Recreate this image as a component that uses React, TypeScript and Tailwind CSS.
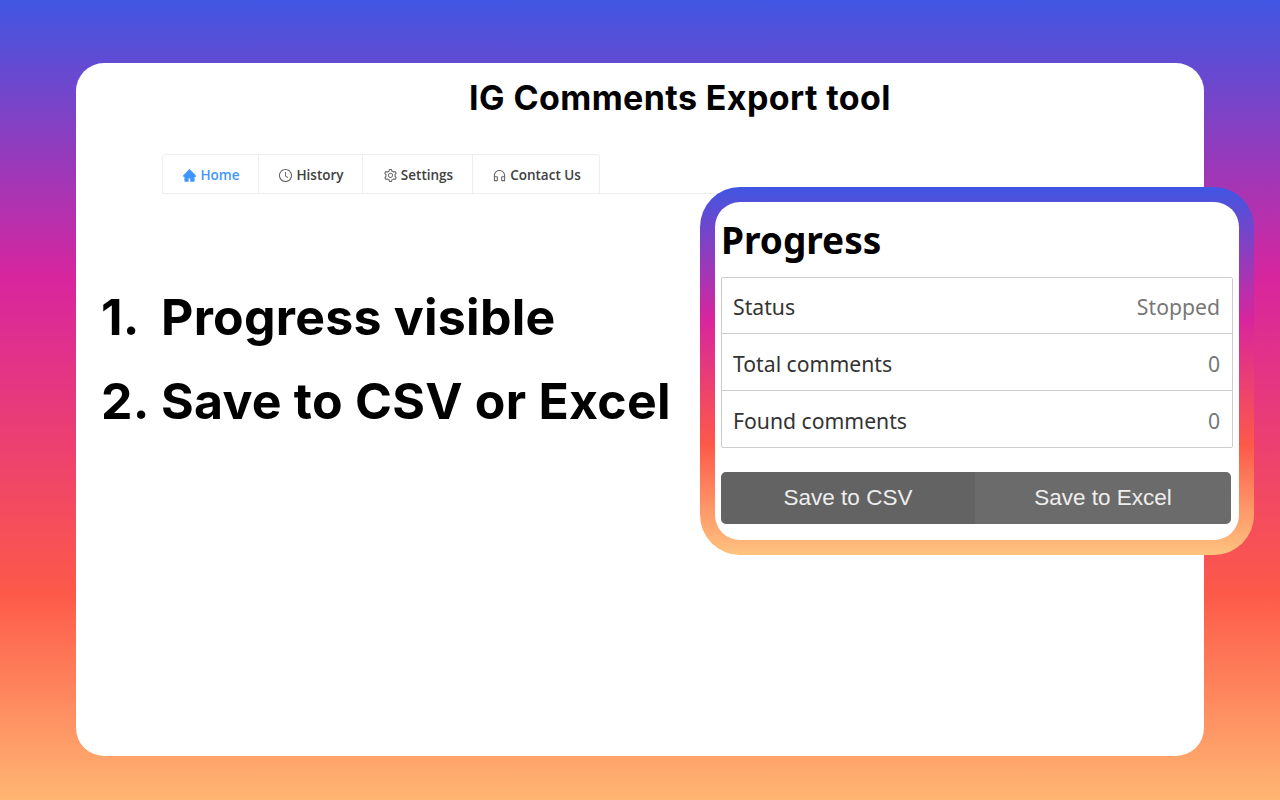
import { AiFillHome, AiOutlineClockCircle, AiOutlineSetting, AiOutlineCustomerService } from 'react-icons/ai';

const tabs = [
  { label: 'Home', icon: AiFillHome, width: 'w-[95px]', active: true },
  { label: 'History', icon: AiOutlineClockCircle, width: 'w-[104px]', active: false },
  { label: 'Settings', icon: AiOutlineSetting, width: 'w-[110px]', active: false },
  { label: 'Contact Us', icon: AiOutlineCustomerService, width: 'w-[127px]', active: false },
];

const rows = [
  { label: 'Status', value: 'Stopped', height: 'h-[55px]' },
  { label: 'Total comments', value: '0', height: 'h-[57px]' },
  { label: 'Found comments', value: '0', height: 'h-[57px]' },
];

const points = [
  { num: '1.', text: 'Progress visible' },
  { num: '2.', text: 'Save to CSV or Excel' },
];

export default function App() {
  return (
    <div className="h-[800px] w-[1280px] overflow-hidden pt-[63px] px-[76px] bg-[linear-gradient(180deg,#4056e2_0%,#d8259d_35%,#fd5949_74%,#ffb673_100%)] font-['Open_Sans',sans-serif]">
      <div className="relative h-[693px] w-[1128px] rounded-[28px] bg-white">
        <h1 className="pl-[80px] pt-[13px] text-center text-[34px] font-bold leading-[44px] tracking-[0.4px] text-black font-['Inter',sans-serif]">IG Comments Export tool</h1>

        <div className="ml-[86px] mt-[34px] flex h-[40px] w-[956px] border-b border-[#eeeef2]">
          <div className="flex rounded-t-[4px] border border-b-0 border-[#eeeef2]">
            {tabs.map((t, i) => (
              <div key={t.label} className={`flex items-center justify-center gap-[3px] pl-px pt-[2px] text-[13.5px] font-[550] ${t.width} ${i > 0 ? 'border-l border-[#eeeef2]' : ''} ${t.active ? 'text-[#4096ff]' : 'text-[#404040]'}`}>
                <t.icon className={`text-[15px] ${t.active ? '' : 'text-[#666]'}`} />
                <span>{t.label}</span>
              </div>
            ))}
          </div>
        </div>

        <div className="ml-[25px] mt-[81px] text-[50px] font-bold leading-[84px] tracking-[0.25px] text-black font-['Inter',sans-serif]">
          {points.map(p => (
            <div key={p.num} className="flex">
              <span className="w-[60px]">{p.num}</span>
              <span>{p.text}</span>
            </div>
          ))}
        </div>

        <div className="absolute left-[624px] top-[124px] h-[368px] w-[554px] rounded-[40px] p-[15px] bg-[linear-gradient(180deg,#4056e2_0%,#d8259d_36%,#fd5949_70%,#fec37f_100%)]">
          <div className="h-full rounded-[25px] bg-white px-[6px] pt-[13px]">
            <h2 className="text-[37px] font-bold leading-[50px] text-black font-['Noto_Sans',sans-serif]">Progress</h2>
            <div className="mt-[12px] w-[512px] rounded-[2px] border border-[#cccccc]">
              {rows.map((r, i) => (
                <div key={r.label} className={`flex items-center justify-between pl-[11px] pr-[12px] pt-[3px] text-[21.2px] font-['Noto_Sans',sans-serif] ${r.height} ${i > 0 ? 'border-t border-[#cccccc]' : ''}`}>
                  <span className="text-[#333]">{r.label}</span>
                  <span className="text-[#777]">{r.value}</span>
                </div>
              ))}
            </div>
            <div className="mt-[24px] flex h-[52px] w-[510px] overflow-hidden rounded-[5px] text-[22.5px] text-[#eee] font-['Liberation_Sans',sans-serif]">
              <div className="flex w-[254px] items-center justify-center bg-[#636363]">Save to CSV</div>
              <div className="flex w-[256px] items-center justify-center bg-[#6b6b6b]">Save to Excel</div>
            </div>
          </div>
        </div>
      </div>
    </div>
  );
}
